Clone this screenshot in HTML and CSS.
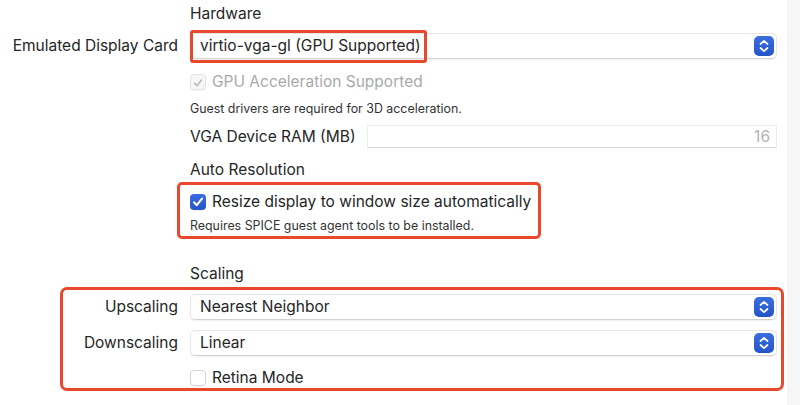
FILE: index.html
```html
<!DOCTYPE html>
<html lang="en">
<head>
    <meta charset="UTF-8">
    <title>Display Settings</title>
    <link rel="stylesheet" href="styles.css">
</head>
<body>

    <div class="page">
        <div class="settings">

            <div class="row section">
                <div class="label"></div>
                <div class="control">Hardware</div>
            </div>

            <div class="row popup-row first">
                <div class="label">Emulated Display Card</div>
                <div class="control">
                    <div class="popup">
                        <span class="popup-text">virtio-vga-gl (GPU Supported)<span class="mark mark-card"></span></span>
                        <span class="stepper"><svg width="20" height="20" viewBox="0 0 20 20"><path d="M6.5 8 L10 4.8 L13.5 8 M6.5 12 L10 15.2 L13.5 12" fill="none" stroke="#fff" stroke-width="1.7" stroke-linecap="round" stroke-linejoin="round"/></svg></span>
                    </div>
                </div>
            </div>

            <div class="row check-row gpu">
                <div class="label"></div>
                <div class="control">
                    <span class="checkbox disabled"><svg width="16" height="16" viewBox="0 0 16 16"><path d="M4 8.3 L6.8 11.2 L12 4.6" fill="none" stroke="#b9b9b9" stroke-width="1.8" stroke-linecap="round" stroke-linejoin="round"/></svg></span>
                    <span class="muted">GPU Acceleration Supported</span>
                </div>
            </div>

            <div class="row note-row">
                <div class="label"></div>
                <div class="control note">Guest drivers are required for 3D acceleration.</div>
            </div>

            <div class="row field-row">
                <div class="label"></div>
                <div class="control">
                    <span class="field-label">VGA Device RAM (MB)</span>
                    <div class="field">16</div>
                </div>
            </div>

            <div class="row section auto">
                <div class="label"></div>
                <div class="control">Auto Resolution</div>
            </div>

            <div class="marked marked-resize">
                <div class="row check-row resize">
                    <div class="label"></div>
                    <div class="control">
                        <span class="checkbox checked"><svg width="16" height="16" viewBox="0 0 16 16"><path d="M4 8.3 L6.8 11.2 L12 4.6" fill="none" stroke="#fff" stroke-width="2" stroke-linecap="round" stroke-linejoin="round"/></svg></span>
                        <span>Resize display to window size automatically</span>
                    </div>
                </div>
                <div class="row note-row spice">
                    <div class="label"></div>
                    <div class="control note">Requires SPICE guest agent tools to be installed.</div>
                </div>
            </div>

            <div class="row section scaling">
                <div class="label"></div>
                <div class="control">Scaling</div>
            </div>

            <div class="marked marked-scaling">
                <div class="row popup-row">
                    <div class="label">Upscaling</div>
                    <div class="control">
                        <div class="popup">
                            <span class="popup-text">Nearest Neighbor</span>
                            <span class="stepper"><svg width="20" height="20" viewBox="0 0 20 20"><path d="M6.5 8 L10 4.8 L13.5 8 M6.5 12 L10 15.2 L13.5 12" fill="none" stroke="#fff" stroke-width="1.7" stroke-linecap="round" stroke-linejoin="round"/></svg></span>
                        </div>
                    </div>
                </div>
                <div class="row popup-row down">
                    <div class="label">Downscaling</div>
                    <div class="control">
                        <div class="popup">
                            <span class="popup-text">Linear</span>
                            <span class="stepper"><svg width="20" height="20" viewBox="0 0 20 20"><path d="M6.5 8 L10 4.8 L13.5 8 M6.5 12 L10 15.2 L13.5 12" fill="none" stroke="#fff" stroke-width="1.7" stroke-linecap="round" stroke-linejoin="round"/></svg></span>
                        </div>
                    </div>
                </div>
                <div class="row check-row retina">
                    <div class="label"></div>
                    <div class="control">
                        <span class="checkbox"></span>
                        <span>Retina Mode</span>
                    </div>
                </div>
            </div>

        </div>
        <div class="side"></div>
    </div>

</body>
</html>
```

FILE: styles.css
```css
body {
    margin: 0;
    font-family: 'Inter', 'Liberation Sans', sans-serif;
    font-size: 15.5px;
    color: #262626;
    background: #fff;
}

.page {
    display: flex;
    height: 405px;
    overflow: hidden;
}

.settings {
    width: 787px;
    padding-top: 5px;
}

.side {
    flex: 1;
    background: #f6f6f6;
}

.row {
    display: flex;
    align-items: center;
    width: 777px;
    line-height: 18px;
}

.label {
    width: 178px;
    text-align: right;
    flex-shrink: 0;
}

.control {
    flex: 1;
    margin-left: 12px;
    display: flex;
    align-items: center;
}

.popup-row {
    margin-top: 11px;
}

.popup-row.first {
    margin-top: 10px;
}

.popup-row.down {
    margin-top: 10px;
}

.popup {
    flex: 1;
    height: 26px;
    display: flex;
    align-items: center;
    justify-content: space-between;
    background: #fff;
    border: 1px solid #e6e6e6;
    border-bottom-color: #d2d2d2;
    border-radius: 5px;
    box-shadow: 0 1px 1px rgba(0, 0, 0, 0.06);
    box-sizing: border-box;
    padding: 0 2px 0 9px;
}

.popup-text {
    position: relative;
}

.stepper {
    width: 20px;
    height: 20px;
    border-radius: 5px;
    background: linear-gradient(#3a6ee0, #2455c8);
    display: flex;
}

.check-row {
    margin-top: 14px;
}

.checkbox {
    width: 16px;
    height: 16px;
    box-sizing: border-box;
    border: 1px solid #d4d4d4;
    border-radius: 4px;
    background: #fff;
    margin-right: 6px;
    display: flex;
    box-shadow: 0 1px 1px rgba(0, 0, 0, 0.05);
}

.checkbox.disabled {
    background: #f7f7f7;
    border-color: #e4e4e4;
}

.checkbox.checked {
    background: linear-gradient(#3a6ee0, #2455c8);
    border: none;
}

.muted {
    color: #a9a9a9;
}

.note-row {
    margin-top: 10px;
    line-height: 15px;
}

.note {
    font-size: 12.4px;
    color: #333;
}

.field-row {
    margin-top: 9px;
}

.field-label {
    width: 177px;
    flex-shrink: 0;
}

.field {
    flex: 1;
    height: 23px;
    box-sizing: border-box;
    border: 1px solid #ececec;
    border-bottom-color: #d8d8d8;
    text-align: right;
    padding-right: 6px;
    line-height: 22px;
    color: #b3b3b3;
}

.section.auto {
    margin-top: 13px;
}

.section.scaling {
    margin-top: 32px;
}

.resize {
    margin-top: 14px;
}

.spice {
    margin-top: 7px;
}

.retina {
    margin-top: 13px;
}

/* red annotation frames */
.marked {
    position: relative;
}

.marked::after,
.mark {
    content: '';
    position: absolute;
    border: 3px solid #e8482b;
    border-radius: 5px;
    pointer-events: none;
}

.mark-card {
    left: -10px;
    right: -6px;
    top: -7px;
    bottom: -8px;
    border-radius: 3px;
}

.marked-resize::after {
    left: 177px;
    width: 364px;
    top: -11px;
    bottom: -6px;
    box-sizing: border-box;
}

.marked-scaling::after {
    left: 60px;
    width: 724px;
    top: -7px;
    bottom: -4px;
    box-sizing: border-box;
    border-radius: 7px;
}
```
